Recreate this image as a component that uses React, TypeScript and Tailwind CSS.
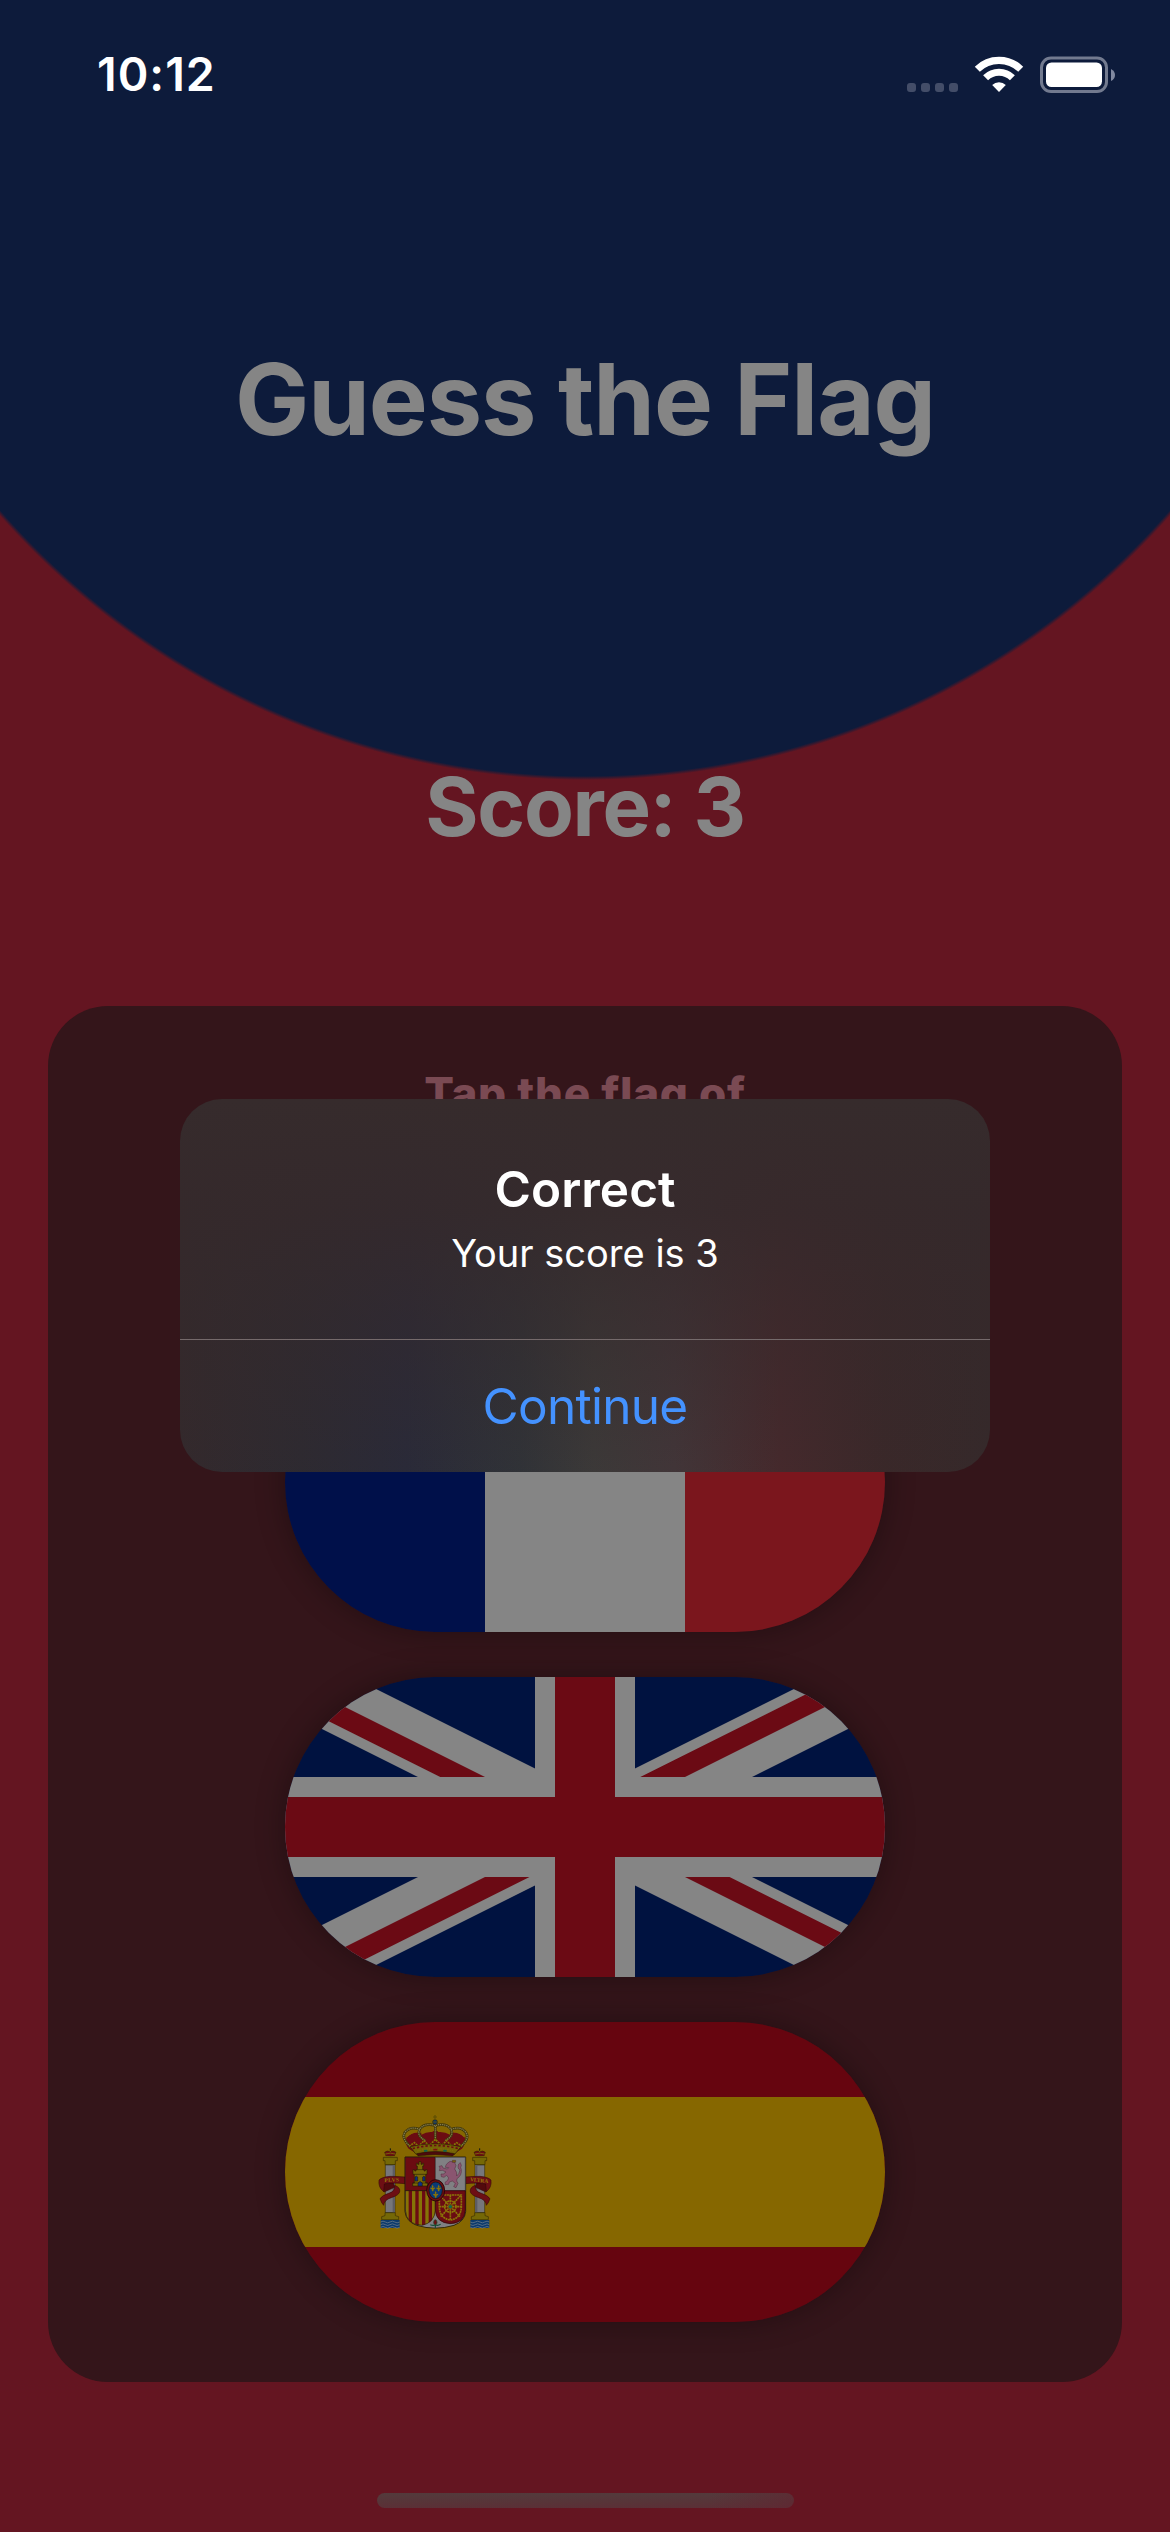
import React from "react";

function SpainArms() {
  const pillar = (
    <g stroke="#2a2200" strokeWidth="1.6">
      <path d="M78 168 L74 157 Q82 150 90 155 Q99 150 108 157 L103 168 Z" fill="#6d0f12" />
      <path d="M76 162 Q91 157 106 162 M91 144 V156 M78 169 Q91 173 104 169" stroke="#7b6c0a" strokeWidth="2.5" fill="none" />
      <path d="M91 145 V152" stroke="#131313" strokeWidth="3" />
      <path d="M70 172 H112 V182 H106 V194 H75 V182 H70 Z" fill="#756806" />
      <path d="M76 195 H105 V338 H76 Z" fill="#76767b" />
      <path d="M98 195 H105 V338 H98 Z" fill="#5c5c63" stroke="none" />
      <path d="M75 338 H106 V347 L116 350 V359 H65 V350 L75 347 Z" fill="#756806" />
      <path d="M62 360 H119 V384 H62 Z" fill="#0b3a6d" stroke="none" />
      <path d="M62 366 q7 -5 14 0 t14 0 t14 0 t15 0 M62 374 q7 -5 14 0 t14 0 t14 0 t15 0 M62 382 q7 -5 14 0 t14 0 t14 0 t15 0" fill="none" stroke="#737f8c" strokeWidth="2.2" />
    </g>
  );
  const ribbon = (
    <g stroke="#2f0507" strokeWidth="1.6" fill="#6d0f14">
      <path d="M60 252 L72 276 L104 262 L100 248 Z" fill="#52090d" />
      <path d="M135 231 Q110 229 90 229 Q66 231 57 240 Q54 262 71 275 L73 252 Q90 247 135 251 Z" />
      <path d="M104 256 Q122 262 119 276 Q116 286 94 293 Q72 300 71 316 L65 308 L60 296 Q66 286 88 279 Q106 274 104 256 Z" />
    </g>
  );
  return (
    <svg x="75" y="78" width="150" height="150" viewBox="0 0 450 450">
      {pillar}
      <g transform="translate(450 0) scale(-1 1)">{pillar}</g>
      {ribbon}
      <g transform="translate(450 0) scale(-1 1)">{ribbon}</g>
      <g fontFamily="Liberation Serif, serif" fontWeight="700" fontSize="16" fill="#9a7d08" textAnchor="middle">
        <text x="96" y="245" letterSpacing="1.5" transform="rotate(-2 96 245)">PLVS</text>
        <text x="357" y="246" transform="rotate(6 357 246)">VLTRA</text>
      </g>

      {/* shield */}
      <path d="M135 171 H317 V335 Q314 364 282 376 Q226 393 170 376 Q138 364 135 335 Z" fill="#808083" stroke="#241c04" strokeWidth="2.5" />
      <path d="M136 172 H226 V272 H136 Z" fill="#6b0c12" stroke="#2a0507" strokeWidth="1.5" />
      <path d="M226 172 H316 V272 H226 Z" fill="#808083" stroke="#2a2a2a" strokeWidth="1.5" />
      <clipPath id="aragon"><path d="M136 272 H226 V330 Q224 368 186 376 Q138 374 136 330 Z" /></clipPath>
      <g clipPath="url(#aragon)">
        <path d="M136 272 H226 V380 H136 Z" fill="#857306" />
        <path d="M151 272 V380 M171 272 V380 M191 272 V380 M211 272 V380" stroke="#6b0c12" strokeWidth="10" />
      </g>
      <path d="M136 272 H226 V330 Q224 368 186 376 Q138 374 136 330 Z" fill="none" stroke="#2a1605" strokeWidth="2" />
      <path d="M226 272 H316 V330 Q314 370 270 371 Q228 368 226 330 Z" fill="#6b0c12" stroke="#2a0507" strokeWidth="2" />

      {/* castle */}
      <g fill="#7a6707" stroke="#241c04" strokeWidth="1.8">
        <path d="M158 258 V249 H163 V223 H159 V209 H164 V213 H168 V209 H172 V198 H169 V190 H173 V193 H177 V185 H183 V193 H187 V190 H191 V198 H188 V209 H192 V213 H196 V209 H201 V223 H197 V249 H203 V258 Z" />
        <path d="M163 223 H197 M158 249 H203 M172 209 H188" />
        <path d="M174 258 V249 Q180 240 187 249 V258 Z M165 243 V231 Q169 226 173 231 V243 Z M188 243 V231 Q192 226 195 231 V243 Z" fill="#0a2f8a" />
      </g>
      {/* lion */}
      <g fill="#8a5570" stroke="#4b2636" strokeWidth="1.4" strokeLinejoin="round">
        <path d="M262 190 L270 184 L283 186 L288 197 L284 207 Q292 216 290 228 Q298 222 300 210 Q291 205 296 192 L301 188 L304 196 Q300 203 304 209 Q306 226 291 236 L290 243 L294 250 L288 263 L281 260 L286 250 L277 243 L268 246 L266 253 L256 254 L255 247 L262 242 L266 234 L260 226 L252 232 L244 230 L243 222 L250 222 L258 216 L247 211 L238 212 L240 204 L237 199 L246 197 L249 204 L262 207 L266 203 L256 202 L258 195 Z" />
        <path d="M277 181 h10 v6 h-10 z" fill="#7a6707" />
      </g>
      {/* chains of Navarre */}
      <g fill="none" stroke="#8a7408" strokeWidth="5" strokeDasharray="6 1.6">
        <path d="M238 285 H304 V322 Q302 356 271 360 Q240 356 238 322 Z" />
        <path d="M271 285 V360 M238 320 H304 M240 287 L300 350 M302 287 L242 350" />
        <circle cx="271" cy="320" r="17" />
      </g>
      <circle cx="271" cy="320" r="5" fill="#0f6a55" stroke="#24500c" />
      {/* pomegranate */}
      <path d="M226 346 L233 360 L250 374 Q226 382 203 375 L219 360 Z" fill="#808083" />
      <path d="M211 374 Q219 378 226 375 Q234 378 242 373 M226 376 V384" stroke="#124f35" strokeWidth="3.5" fill="none" />
      <ellipse cx="226" cy="367" rx="5" ry="8" fill="#6d0f14" stroke="#1b4c28" strokeWidth="2" />
      {/* escutcheon */}
      <ellipse cx="227" cy="271" rx="27" ry="32" fill="#6b0c12" stroke="#1d0406" strokeWidth="2.5" />
      <ellipse cx="227" cy="271" rx="20" ry="25" fill="#0a3a76" stroke="#1a1206" strokeWidth="2" />
      <g fill="#8a7408">
        <path d="M218 254 Q223 260 219 264 Q225 260 226 265 L221 268 L220 274 H216 L215 268 L210 265 Q212 260 217 264 Q213 260 218 254 Z" />
        <path d="M236 254 Q241 260 237 264 Q243 260 244 265 L239 268 L238 274 H234 L233 268 L228 265 Q230 260 235 264 Q231 260 236 254 Z" />
        <path d="M227 273 Q232 279 228 283 Q234 279 235 284 L230 287 L229 293 H225 L224 287 L219 284 Q221 279 226 283 Q222 279 227 273 Z" />
      </g>

      {/* crown */}
      <path d="M146 146 Q132 130 140 112 Q158 94 184 98 Q226 88 268 98 Q296 94 314 112 Q320 130 306 146 L284 160 H168 Z" fill="#6b0c12" />
      <path d="M141 112 Q158 92 186 98 L177 92 Q150 84 134 100 Z M312 112 Q296 92 268 98 L276 92 Q302 84 320 100 Z" fill="#866700" />
      <path d="M184 104 Q200 94 218 96 V84 Q196 80 184 96 Z M270 104 Q254 94 234 96 V84 Q258 80 270 96 Z" fill="#866700" />
      <g fill="none" stroke="#3f370b" strokeWidth="8">
        <path d="M151 140 Q124 116 134 98 Q150 77 179 88" />
        <path d="M301 140 Q330 116 318 98 Q304 77 273 88" />
        <path d="M196 122 Q169 106 179 88 Q192 68 225 76" />
        <path d="M256 122 Q283 106 273 88 Q260 68 227 76" />
        <path d="M226 76 V122" />
      </g>
      <g fill="none" stroke="#857c4c" strokeWidth="4" strokeDasharray="4 2.4">
        <path d="M151 140 Q124 116 134 98 Q150 77 179 88" />
        <path d="M301 140 Q330 116 318 98 Q304 77 273 88" />
        <path d="M196 122 Q169 106 179 88 Q192 68 225 76" />
        <path d="M256 122 Q283 106 273 88 Q260 68 227 76" />
        <path d="M226 78 V116" />
      </g>
      <path d="M147 139 L163 128 L176 139 L192 122 L207 137 L226 118 L245 137 L260 122 L276 139 L290 128 L306 139" fill="none" stroke="#857306" strokeWidth="5" strokeDasharray="6 2.5" />
      <path d="M150 140 Q226 122 303 140 L284 163 Q226 150 168 163 Z" fill="#756406" stroke="#2a2200" strokeWidth="2" />
      <path d="M158 146 Q226 127 296 146" fill="none" stroke="#6b0c12" strokeWidth="5" strokeDasharray="7 6" />
      <path d="M172 153 Q226 139 282 153" fill="none" stroke="#857306" strokeWidth="3" strokeDasharray="4 3" />
      <path d="M170 161 Q226 148 284 161 L278 168 Q226 160 174 168 Z" fill="#4c0a0c" stroke="#241405" strokeWidth="1.5" />
      <path d="M192 152 h10 M250 152 h10" stroke="#11614a" strokeWidth="6" />
      <path d="M220 149 h12" stroke="#7d1013" strokeWidth="5" />
      <circle cx="225" cy="66" r="7" fill="#0b3a76" stroke="#26220a" strokeWidth="2" />
      <path d="M225 45 V60 M219 51 H231 M218 66 H232" stroke="#5f4f05" strokeWidth="3.5" />
    </svg>
  );
}

function France() {
  return (
    <svg className="block h-full w-full" viewBox="0 0 600 300">
      <rect width="200" height="300" fill="#00104a" />
      <rect x="200" width="200" height="300" fill="#858585" />
      <rect x="400" width="200" height="300" fill="#7b161d" />
    </svg>
  );
}

function UnitedKingdom() {
  return (
    <svg className="block h-full w-full" viewBox="0 0 600 300">
      <clipPath id="saltire">
        <path d="M300,150h300v150zv150h-300zh-300v-150zv-150h300z" />
      </clipPath>
      <rect width="600" height="300" fill="#001240" />
      <path d="M0,0L600,300M600,0L0,300" stroke="#858585" strokeWidth="60" />
      <path d="M0,0L600,300M600,0L0,300" stroke="#6b0a14" strokeWidth="40" clipPath="url(#saltire)" />
      <path d="M300,0V300M0,150H600" stroke="#858585" strokeWidth="100" />
      <path d="M300,0V300M0,150H600" stroke="#6b0a14" strokeWidth="60" />
    </svg>
  );
}

function Spain() {
  return (
    <svg className="block h-full w-full" viewBox="0 0 600 300">
      <rect width="600" height="300" fill="#66050f" />
      <rect y="75" width="600" height="150" fill="#866700" />
      <SpainArms />
    </svg>
  );
}

function Flag({ children }: { children: React.ReactNode }) {
  return (
    <button className="block h-[300px] w-[600px] shrink-0 overflow-hidden rounded-full shadow-[0_0_30px_rgba(0,0,0,0.33)]">
      {children}
    </button>
  );
}

function StatusBar() {
  return (
    <div className="flex h-[148px] items-center justify-between pr-[55px] pl-[97px]">
      <span className="text-[46.5px] leading-none font-semibold tracking-[1px] text-white">10:12</span>
      <svg width="208" height="37" viewBox="0 0 208 37" className="block">
        <g fill="#434d68">
          <rect x="0" y="27" width="9" height="9" rx="3" />
          <rect x="14" y="27" width="9" height="9" rx="3" />
          <rect x="28" y="27" width="9" height="9" rx="3" />
          <rect x="42" y="27" width="9" height="9" rx="3" />
        </g>
        <g fill="none" stroke="#fff">
          <path d="M70.3 13.2 A31 31 0 0 1 113.7 13.2" strokeWidth="7.2" />
          <path d="M78.6 21.7 A19 19 0 0 1 105.4 21.7" strokeWidth="7" />
        </g>
        <path d="M92 36 L85.2 29 A9.6 9.6 0 0 1 98.8 29 Z" fill="#fff" />
        <rect x="134.5" y="2" width="65" height="33.5" rx="9.5" fill="none" stroke="#727a8f" strokeWidth="3" />
        <rect x="139" y="6.5" width="56" height="24.5" rx="5.5" fill="#fff" />
        <path d="M204 13 Q208 15 208 19 Q208 23 204 25 Z" fill="#8189a0" />
      </svg>
    </div>
  );
}

function Alert() {
  return (
    <div className="absolute top-[1099px] left-[180px] flex h-[373px] w-[810px] flex-col overflow-hidden rounded-[42px] bg-[linear-gradient(to_bottom,#362b2c_0%,#35292be0_30%,#35292b77_64%,#35292b10_100%),linear-gradient(to_right,#33292c_0%,#2d2a31_15%,#292a39_28%,#303338_42%,#3c3a39_51%,#423639_61%,#46292c_74%,#3a2829_87%,#35292a_100%)] text-center">
      <div className="flex h-[240px] flex-col items-center pt-[60px]">
        <div className="text-[49.5px] leading-[60px] font-semibold text-white">Correct</div>
        <div className="mt-[9px] text-[38px] leading-[50px] text-white">Your score is 3</div>
      </div>
      <div className="h-px bg-[#756a6b]" />
      <button className="flex h-[132px] w-full items-center justify-center pt-[2px] text-[49.5px] leading-none tracking-[-0.7px] text-[#4492ff]">
        Continue
      </button>
    </div>
  );
}

export default function App() {
  return (
    <main className="relative flex h-[2532px] w-[1170px] flex-col overflow-hidden bg-[radial-gradient(circle_at_50%_0px,#0d1b3b_776px,#641521_780px)] font-['Inter',sans-serif]">
      <StatusBar />
      <h1 className="mt-[191px] text-center text-[99px] leading-[120px] font-bold tracking-[-1.04px] text-[#858585]">Guess the Flag</h1>
      <div className="mt-[298px] text-center text-[81.5px] leading-[100px] font-bold tracking-[-1.35px] text-[#858585]">Score: 3</div>
      <section className="mx-[48px] mt-[149px] flex h-[1376px] shrink-0 flex-col items-center rounded-[60px] bg-[#34151a] pt-[60px]">
        <div className="text-[44px] leading-[54px] font-extrabold tracking-[0.75px] text-[#7a4a53]">Tap the flag of</div>
        <div className="mt-[212px] flex flex-col gap-[45px]">
          <Flag><France /></Flag>
          <Flag><UnitedKingdom /></Flag>
          <Flag><Spain /></Flag>
        </div>
      </section>
      <div className="mx-auto mt-[111px] h-[15px] w-[417px] shrink-0 rounded-full bg-[linear-gradient(to_right,transparent_80%,#60253099_100%),linear-gradient(to_bottom,#533a3c,#5b3036)]" />
      <Alert />
    </main>
  );
}
